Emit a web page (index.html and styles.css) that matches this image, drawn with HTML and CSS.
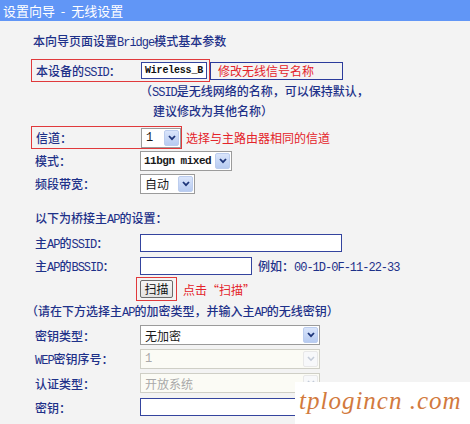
FILE: index.html
```html
<!DOCTYPE html>
<html lang="zh-CN">
<head>
    <meta charset="UTF-8">
    <title>设置向导 - 无线设置</title>
    <link rel="stylesheet" href="styles.css">
</head>
<body>
    <div class="titlebar">设置向导 &nbsp;- &nbsp;无线设置</div>

    <div class="panel">
        <p class="intro">本向导页面设置<span class="en">Bridge</span>模式基本参数</p>

        <!-- 本设备的SSID -->
        <div class="row row-ssid">
            <div class="mark mark-ssid">
                <span class="label">本设备的<span class="en">SSID</span>：</span>
                <span class="input input-ssid">Wireless_B</span>
            </div>
            <span class="hint boxed">修改无线信号名称</span>
        </div>
        <div class="note">
            <div>（<span class="en">SSID</span>是无线网络的名称，可以保持默认，</div>
            <div class="indent">建议修改为其他名称）</div>
        </div>

        <!-- 信道 / 模式 / 频段带宽 -->
        <div class="row row-channel">
            <div class="mark">
                <span class="label">信道：</span>
                <span class="select w-channel"><span class="val en">1</span><span class="arrow"><svg width="8" height="6" viewBox="0 0 8 6"><path d="M1 1 L4 4.2 L7 1" fill="none" stroke="#1d3579" stroke-width="1.8"/></svg></span></span>
            </div>
            <span class="hint near">选择与主路由器相同的信道</span>
        </div>
        <div class="row row-short">
            <span class="label">模式：</span>
            <span class="select w-mode"><span class="val en">11bgn mixed</span><span class="arrow"><svg width="8" height="6" viewBox="0 0 8 6"><path d="M1 1 L4 4.2 L7 1" fill="none" stroke="#1d3579" stroke-width="1.8"/></svg></span></span>
        </div>
        <div class="row row-short">
            <span class="label">频段带宽：</span>
            <span class="select w-band"><span class="val">自动</span><span class="arrow"><svg width="8" height="6" viewBox="0 0 8 6"><path d="M1 1 L4 4.2 L7 1" fill="none" stroke="#1d3579" stroke-width="1.8"/></svg></span></span>
        </div>

        <!-- 桥接主AP -->
        <p class="subhead">以下为桥接主<span class="en">AP</span>的设置：</p>
        <div class="row row-ap">
            <span class="label">主<span class="en">AP</span>的<span class="en">SSID</span>：</span>
            <span class="input w-long"></span>
        </div>
        <div class="row row-bssid">
            <span class="label">主<span class="en">AP</span>的<span class="en">BSSID</span>：</span>
            <span class="input w-bssid"></span>
            <span class="example">例如：<span class="en">00-1D-0F-11-22-33</span></span>
        </div>
        <div class="row row-scan">
            <div class="mark mark-scan">
                <button type="button" class="btn">扫描</button>
            </div>
            <span class="hint">点击“扫描”</span>
        </div>
        <p class="note2">（请在下方选择主<span class="en">AP</span>的加密类型，并输入主<span class="en">AP</span>的无线密钥）</p>

        <!-- 加密 -->
        <div class="row row-key first">
            <span class="label">密钥类型：</span>
            <span class="select w-sec"><span class="val">无加密</span><span class="arrow"><svg width="8" height="6" viewBox="0 0 8 6"><path d="M1 1 L4 4.2 L7 1" fill="none" stroke="#1d3579" stroke-width="1.8"/></svg></span></span>
        </div>
        <div class="row row-key">
            <span class="label"><span class="en">WEP</span>密钥序号：</span>
            <span class="select w-sec off"><span class="val en">1</span><span class="arrow"><svg width="8" height="6" viewBox="0 0 8 6"><path d="M1 1 L4 4.2 L7 1" fill="none" stroke="#c4cbd8" stroke-width="1.6"/></svg></span></span>
        </div>
        <div class="row row-key">
            <span class="label">认证类型：</span>
            <span class="select w-sec off"><span class="val">开放系统</span><span class="arrow"><svg width="8" height="6" viewBox="0 0 8 6"><path d="M1 1 L4 4.2 L7 1" fill="none" stroke="#c4cbd8" stroke-width="1.6"/></svg></span></span>
        </div>
        <div class="row row-key">
            <span class="label">密钥：</span>
            <span class="input w-long"></span>
        </div>
    </div>

    <div class="watermark">tplogincn .com</div>
</body>
</html>
```

FILE: styles.css
```css
* {
    margin: 0;
    padding: 0;
    box-sizing: border-box;
}

body {
    width: 470px;
    height: 424px;
    overflow: hidden;
    position: relative;
    background: #f3f3f3;
    color: #1e3189;
    font-family: "Noto Sans CJK SC", sans-serif;
    font-size: 12px;
    font-weight: 500;
}

.en {
    font-family: "Liberation Mono", "Noto Sans CJK SC", monospace;
    letter-spacing: -1px;
}

.titlebar {
    height: 21px;
    line-height: 21px;
    padding-left: 3px;
    background: #6196f6;
    color: #fff;
    font-size: 13px;
    font-weight: normal;
}

.panel {
    padding-left: 31px;
}

.intro {
    margin: 11px 0 0 2px;
    height: 18px;
    line-height: 18px;
}

.row {
    display: flex;
    align-items: center;
    height: 24px;
}

.label {
    width: 109px;
    padding-left: 4px;
    flex-shrink: 0;
    white-space: nowrap;
}

/* red outline round a label + control */
.mark {
    display: flex;
    align-items: center;
    height: 23px;
    border: 1px solid #e0393b;
}

.mark-ssid {
    padding-right: 2px;
}

.row-ssid {
    margin-top: 9px;
    height: 23px;
}

.hint {
    color: #e4232a;
    font-weight: normal;
    margin-left: 6px;
    white-space: nowrap;
}

.hint.near {
    margin-left: 4px;
}

.hint.boxed {
    margin-left: 0;
    width: 133px;
    height: 18px;
    line-height: 16px;
    padding-left: 7px;
    border: 1px solid #2b3b9c;
}

.input {
    display: block;
    height: 18px;
    border: 1px solid #34449e;
    background: #fff;
}

.input-ssid {
    width: 66px;
    height: 17px;
    line-height: 15px;
    padding-left: 3px;
    font-family: "Liberation Mono", monospace;
    font-size: 10px;
    font-weight: bold;
    color: #111;
    letter-spacing: -0.2px;
}

.w-long {
    width: 202px;
}

.w-bssid {
    width: 112px;
}

.note {
    margin-left: 109px;
    line-height: 18px;
}

.note .indent {
    padding-left: 13px;
}

.row-channel {
    margin-top: 6px;
    height: 23px;
}

.row-short {
    height: 23px;
}

/* drop-down boxes */
.select {
    display: flex;
    align-items: center;
    height: 20px;
    border: 1px solid #9b9b9b;
    background: #fff;
    color: #1a1a1a;
    font-weight: normal;
}

.select .val {
    flex: 1;
    padding-left: 4px;
    white-space: nowrap;
}

.select .arrow {
    width: 15px;
    height: 16px;
    margin-right: 1px;
    display: flex;
    align-items: center;
    justify-content: center;
    background: linear-gradient(#dae5fb, #b7cbf1);
    border: 1px solid #bccdee;
    border-radius: 2px;
}

.select.off {
    border-color: #cfcfc6;
    background: #fbfbf5;
    color: #a9a9a9;
}

.select.off .arrow {
    background: #f7f8fa;
    border-color: #e8e8e8;
}

.w-channel {
    width: 40px;
}

.w-mode {
    width: 92px;
}

.w-mode .val {
    font-size: 11px;
    font-weight: bold;
    letter-spacing: -0.5px;
    padding-left: 3px;
}

.w-band {
    width: 55px;
}

.w-sec {
    width: 180px;
}

.subhead {
    margin: 14px 0 0 4px;
    height: 18px;
    line-height: 18px;
}

.row-ap {
    margin-top: 4px;
}

.row-bssid {
    height: 22px;
}

.example {
    margin-left: 6px;
    white-space: nowrap;
}

.row-scan {
    height: 24px;
}

.mark-scan {
    margin-left: 105px;
    width: 41px;
    height: 24px;
    justify-content: center;
}

.btn {
    width: 33px;
    height: 18px;
    font-family: "Noto Sans CJK SC", sans-serif;
    font-size: 12px;
    line-height: 14px;
    color: #111;
    background: linear-gradient(#f6f6f6, #e2e2e2);
    border: 1px solid #6b6b6b;
    border-radius: 2px;
}

.note2 {
    margin-left: -5px;
    height: 20px;
    line-height: 20px;
    white-space: nowrap;
}

.row-key.first {
    margin-top: 2px;
}

.watermark {
    position: absolute;
    right: 0;
    bottom: 0;
    width: 175px;
    height: 42px;
    padding: 5px 0 0 4px;
    background: #fff;
    color: #d27a3e;
    font-family: "Liberation Serif", serif;
    font-style: italic;
    font-size: 25px;
    letter-spacing: 1px;
    white-space: nowrap;
}
```
